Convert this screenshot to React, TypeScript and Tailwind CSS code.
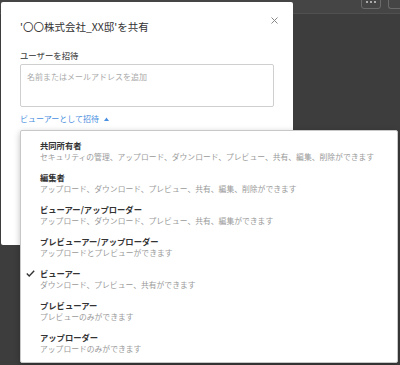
import React from 'react';

const roles = [
  { name: '共同所有者', desc: 'セキュリティの管理、アップロード、ダウンロード、プレビュー、共有、編集、削除ができます' },
  { name: '編集者', desc: 'アップロード、ダウンロード、プレビュー、共有、編集、削除ができます' },
  { name: 'ビューアー/アップローダー', desc: 'アップロード、ダウンロード、プレビュー、共有、編集ができます' },
  { name: 'プレビューアー/アップローダー', desc: 'アップロードとプレビューができます' },
  { name: 'ビューアー', desc: 'ダウンロード、プレビュー、共有ができます', checked: true },
  { name: 'プレビューアー', desc: 'プレビューのみができます' },
  { name: 'アップローダー', desc: 'アップロードのみができます' },
];

// 共有ダイアログ + 権限ドロップダウン
const App = () => {
  return (
    <div
      className="relative w-[400px] h-[365px] overflow-hidden bg-[#3d3d3d]"
      style={{ fontFamily: '"Noto Sans CJK JP", "Noto Sans", sans-serif' }}
    >
      {/* 背景のヘッダー */}
      <div className="h-[14px] bg-[#454545] border-b border-[#505050] flex justify-end items-start gap-[7px]">
        <div className="w-[20px] h-[14px] -mt-[5px] rounded-[3px] border border-[#6a6a6a] flex items-center justify-center">
          <svg width="10" height="2" viewBox="0 0 10 2">
            <circle cx="1" cy="1" r="0.9" fill="#ddd" />
            <circle cx="5" cy="1" r="0.9" fill="#ddd" />
            <circle cx="9" cy="1" r="0.9" fill="#ddd" />
          </svg>
        </div>
        <div className="w-[12px] h-[14px] -mt-[5px] rounded-l-[3px] border border-r-0 border-[#6a6a6a]" />
      </div>

      {/* モーダル */}
      <div className="absolute left-[1px] top-[2px] w-[292px] h-[243px] bg-white rounded-[2px] pl-[19px] pt-[18px]">
        <div className="flex items-start justify-between pr-[15px]">
          <div className="text-[10.5px] leading-[14px] text-[#333]">'〇〇株式会社_XX邸'を共有</div>
          <svg className="-mt-[3px]" width="7" height="7" viewBox="0 0 7 7">
            <path d="M0.5 0.5 L6.5 6.5 M6.5 0.5 L0.5 6.5" stroke="#888" strokeWidth="1" />
          </svg>
        </div>

        <div className="mt-[15px] text-[8.4px] leading-[12px] font-medium text-[#555]">ユーザーを招待</div>
        <div className="mt-[3px] w-[254px] h-[43px] border border-[#cfcfcf] rounded-[2px] px-[6px] pt-[6px] text-[8px] leading-[12px] text-[#aaa]">
          名前またはメールアドレスを追加
        </div>
        <div className="mt-[6px] flex items-center gap-[5px] text-[8px] leading-[12px] text-[#4a8fe0]">
          ビューアーとして招待
          <svg width="5" height="4" viewBox="0 0 5 4">
            <path d="M0 4 L2.5 0.5 L5 4 Z" fill="#4a8fe0" />
          </svg>
        </div>
      </div>

      {/* 権限ドロップダウン */}
      <div className="absolute left-[20px] top-[130px] w-[378px] h-[233px] bg-white border border-[#c8c8c8] rounded-[2px] shadow-[0_2px_6px_rgba(0,0,0,0.25)] pt-[8px] pl-[19px] flex flex-col gap-[8px]">
        {roles.map((r) => (
          <div key={r.name} className="relative">
            {r.checked && (
              <svg className="absolute -left-[14px] top-[3px]" width="9" height="7" viewBox="0 0 9 7">
                <path d="M0.8 3.6 L3.2 5.9 L8.2 0.8" fill="none" stroke="#333" strokeWidth="1.4" />
              </svg>
            )}
            <div className="text-[8.3px] leading-[12px] font-bold text-[#333]">{r.name}</div>
            <div className="text-[7.8px] leading-[12px] text-[#9a9a9a]">{r.desc}</div>
          </div>
        ))}
      </div>
    </div>
  );
};

export default App;
